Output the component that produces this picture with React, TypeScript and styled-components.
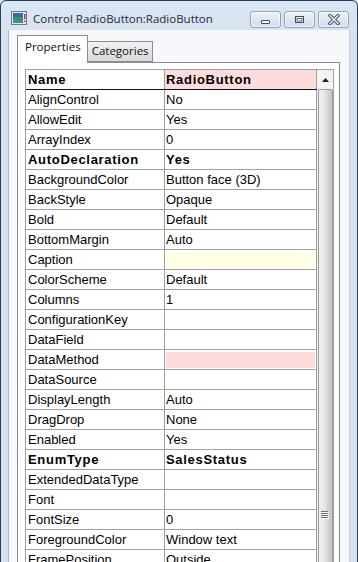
import React from "react";
import styled, { createGlobalStyle } from "styled-components";

const GlobalStyle = createGlobalStyle`
  html, body { margin: 0; padding: 0; background: #d8e4f2; overflow: hidden; }
  #root { width: 358px; height: 562px; overflow: hidden; }
`;

const Window = styled.div`
  box-sizing: border-box;
  width: 358px;
  height: 580px;
  border: 1px solid #2b3d57;
  border-radius: 6px 6px 0 0;
  background: linear-gradient(#dbe6f3, #d6e2f0 40px, #d6e2f0);
  display: flex;
  flex-direction: column;
  overflow: hidden;
`;

const TitleBar = styled.div`
  box-sizing: border-box;
  height: 29px;
  flex: 0 0 auto;
  display: flex;
  align-items: center;
  padding: 5px 8px 0 10px;
  gap: 6px;
`;

const TitleText = styled.div`
  flex: 1;
  font-family: "Open Sans", "Noto Sans", sans-serif;
  font-size: 11.5px;
  color: #1e2a3a;
`;

const Buttons = styled.div`
  display: flex;
  gap: 3px;
  align-self: flex-start;
  margin-top: 5px;
`;

const CaptionButton = styled.div`
  box-sizing: border-box;
  width: 31px;
  height: 17px;
  border: 1px solid #8fa3bf;
  border-radius: 3px;
  background: linear-gradient(#eef3f9, #dde6f2 50%, #d3deec);
  display: flex;
  align-items: center;
  justify-content: center;
  box-shadow: inset 0 0 0 1px rgba(255,255,255,0.6);
`;

const Client = styled.div`
  flex: 1;
  margin: 0 7px 0 7px;
  background: #f6f8fb;
  border-left: 1px solid #a9b8cc;
  border-right: 1px solid #c4d0df;
  padding: 4px 9px 0 8px;
  display: flex;
  flex-direction: column;
`;

const TabStrip = styled.div`
  display: flex;
  align-items: flex-end;
  height: 28px;
  position: relative;
  z-index: 1;
`;

const Tab = styled.div<{ $active?: boolean }>`
  box-sizing: border-box;
  font-family: "Open Sans", "Noto Sans", sans-serif;
  font-size: 11.5px;
  color: #111;
  border: 1px solid #898c95;
  border-bottom: ${(p) => (p.$active ? "none" : "1px solid #898c95")};
  margin-left: ${(p) => (p.$active ? "0" : "-1px")};
  height: ${(p) => (p.$active ? "28px" : "21px")};
  padding: ${(p) => (p.$active ? "3px 6px 0 7px" : "1px 3px 0 4px")};
  background: ${(p) => (p.$active ? "#ffffff" : "linear-gradient(#f3f3f3, #e4e4e4 50%, #d9d9d9)")};
  margin-bottom: ${(p) => (p.$active ? "-1px" : "0")};
`;

const TabPanel = styled.div`
  flex: 1;
  box-sizing: border-box;
  border: 1px solid #898c95;
  background: #ffffff;
  padding: 6px 5px 0 7px;
  display: flex;
`;

const GridFrame = styled.div`
  flex: 1;
  border: 1px solid #a0a0a0;
  border-bottom: none;
  display: flex;
  overflow: hidden;
`;

const Table = styled.div`
  width: 291px;
  display: flex;
  flex-direction: column;
`;

const Row = styled.div<{ $header?: boolean }>`
  display: grid;
  grid-template-columns: 139px 152px;
  height: 20px;
  box-sizing: border-box;
  border-bottom: 1px solid ${(p) => (p.$header ? "#111" : "#a0a0a0")};
  flex: 0 0 auto;
`;

const Cell = styled.div<{ $bold?: boolean; $bg?: string; $inset?: boolean; $value?: boolean }>`
  box-sizing: border-box;
  border-right: 1px solid #a0a0a0;
  font-family: "Liberation Sans", Arial, sans-serif;
  font-size: 13px;
  font-weight: ${(p) => (p.$bold ? 700 : 400)};
  letter-spacing: ${(p) => (p.$bold ? "0.7px" : "0")};
  color: #000;
  line-height: 19px;
  padding-left: ${(p) => (p.$value ? "1px" : "2px")};
  white-space: nowrap;
  overflow: hidden;
  background: ${(p) => (p.$bg && !p.$inset ? p.$bg : "#fff")};
  display: flex;
`;

const InsetFill = styled.div<{ $bg: string }>`
  flex: 1;
  margin: 2px 1px 1px 0;
  background: ${(p) => p.$bg};
`;

const ScrollBar = styled.div`
  width: 16px;
  border-right: 1px solid #a0a0a0;
  background: #eeeeee;
  display: flex;
  flex-direction: column;
  align-items: center;
  flex: 0 0 auto;
  overflow: hidden;
`;

const ArrowButton = styled.div`
  width: 16px;
  height: 19px;
  display: flex;
  align-items: center;
  justify-content: center;
  background: #f4f4f4;
  flex: 0 0 auto;
`;

const Thumb = styled.div`
  box-sizing: border-box;
  width: 15px;
  height: 852px;
  flex: 0 0 auto;
  border: 1px solid #9c9c9c;
  border-radius: 2px;
  background: linear-gradient(to right, #f2f2f2, #e6e6e6 45%, #d2d2d2 70%, #c4c4c4);
  display: flex;
  align-items: center;
  justify-content: center;
`;

type RowData = { label: string; value: string; bold?: boolean; fill?: string };

const rows: RowData[] = [
  { label: "AlignControl", value: "No" },
  { label: "AllowEdit", value: "Yes" },
  { label: "ArrayIndex", value: "0" },
  { label: "AutoDeclaration", value: "Yes", bold: true },
  { label: "BackgroundColor", value: "Button face (3D)" },
  { label: "BackStyle", value: "Opaque" },
  { label: "Bold", value: "Default" },
  { label: "BottomMargin", value: "Auto" },
  { label: "Caption", value: "", fill: "#ffffe4" },
  { label: "ColorScheme", value: "Default" },
  { label: "Columns", value: "1" },
  { label: "ConfigurationKey", value: "" },
  { label: "DataField", value: "" },
  { label: "DataMethod", value: "", fill: "#ffdcdc" },
  { label: "DataSource", value: "" },
  { label: "DisplayLength", value: "Auto" },
  { label: "DragDrop", value: "None" },
  { label: "Enabled", value: "Yes" },
  { label: "EnumType", value: "SalesStatus", bold: true },
  { label: "ExtendedDataType", value: "" },
  { label: "Font", value: "" },
  { label: "FontSize", value: "0" },
  { label: "ForegroundColor", value: "Window text" },
  { label: "FramePosition", value: "Outside" },
  { label: "Height", value: "Auto" },
];

const AppIcon = () => (
  <svg width="16" height="14" viewBox="0 0 16 14">
    <rect x="0.5" y="0.5" width="15" height="13" fill="#dfe6ee" stroke="#6b7a8c" />
    <rect x="2" y="2" width="10" height="10" fill="#3f8f7a" />
    <rect x="2" y="2" width="10" height="4" fill="#2e6fa6" />
    <rect x="13" y="3" width="1.5" height="5" fill="#c0392b" />
    <rect x="13" y="9.5" width="1.5" height="1.5" fill="#c0392b" />
  </svg>
);

const MinGlyph = () => (
  <svg width="11" height="11" viewBox="0 0 11 11">
    <rect x="1.5" y="6.5" width="8" height="3" rx="0.5" fill="#fff" stroke="#3b4b60" />
  </svg>
);

const MaxGlyph = () => (
  <svg width="11" height="11" viewBox="0 0 11 11">
    <rect x="1.5" y="2.5" width="8" height="6" fill="#fff" stroke="#3b4b60" />
    <rect x="3" y="4.5" width="5" height="2.5" fill="#fff" stroke="#3b4b60" strokeWidth="0.8" />
  </svg>
);

const CloseGlyph = () => (
  <svg width="12" height="11" viewBox="0 0 12 11">
    <path d="M2 1.5 L10 9.5 M10 1.5 L2 9.5" stroke="#3b4b60" strokeWidth="3.2" strokeLinecap="square" />
    <path d="M2 1.5 L10 9.5 M10 1.5 L2 9.5" stroke="#f4f6f9" strokeWidth="1.4" strokeLinecap="square" />
  </svg>
);

const UpArrow = () => (
  <svg width="7" height="4" viewBox="0 0 7 4">
    <path d="M0 4 L3.5 0 L7 4 Z" fill="#222" />
  </svg>
);

const Grip = () => (
  <svg width="8" height="8" viewBox="0 0 8 8">
    <g stroke="#6e6e6e" strokeWidth="1">
      <path d="M0 0.5 H7 M0 2.5 H7 M0 4.5 H7 M0 6.5 H7" />
    </g>
    <g stroke="#ffffff" strokeWidth="1">
      <path d="M1 1.5 H8 M1 3.5 H8 M1 5.5 H8 M1 7.5 H8" />
    </g>
  </svg>
);

export default function App() {
  return (
    <>
      <GlobalStyle />
      <Window>
        <TitleBar>
          <AppIcon />
          <TitleText>Control RadioButton:RadioButton</TitleText>
          <Buttons>
            <CaptionButton><MinGlyph /></CaptionButton>
            <CaptionButton><MaxGlyph /></CaptionButton>
            <CaptionButton><CloseGlyph /></CaptionButton>
          </Buttons>
        </TitleBar>
        <Client>
          <TabStrip>
            <Tab $active>Properties</Tab>
            <Tab>Categories</Tab>
          </TabStrip>
          <TabPanel>
            <GridFrame>
              <Table>
                <Row $header>
                  <Cell $bold>Name</Cell>
                  <Cell $bold $value $bg="#ffdcdc">RadioButton</Cell>
                </Row>
                {rows.map((r) => (
                  <Row key={r.label}>
                    <Cell $bold={r.bold}>{r.label}</Cell>
                    <Cell $bold={r.bold} $value $bg={r.fill} $inset={!!r.fill}>
                      {r.fill ? <InsetFill $bg={r.fill} /> : r.value}
                    </Cell>
                  </Row>
                ))}
              </Table>
              <ScrollBar>
                <ArrowButton><UpArrow /></ArrowButton>
                <Thumb><Grip /></Thumb>
              </ScrollBar>
            </GridFrame>
          </TabPanel>
        </Client>
      </Window>
    </>
  );
}
